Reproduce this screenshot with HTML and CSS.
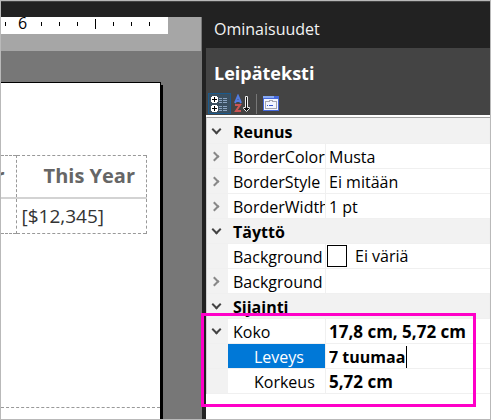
FILE: index.html
```
<!DOCTYPE html>
<html lang="fi">
<head>
<meta charset="utf-8">
<title>Ominaisuudet</title>
<link rel="stylesheet" href="styles.css">
</head>
<body>
<div class="window">
  <main class="designer">
    <div class="ruler-band">
      <svg class="ruler" width="167" height="17" viewBox="0 0 167 17" shape-rendering="crispEdges" aria-hidden="true">
        <path fill="#000" d="M4 5h1v4h-1zM40 5h1v4h-1zM58 5h1v4h-1zM76 5h1v4h-1zM94 2h1v10h-1zM112 5h1v4h-1zM130 5h1v4h-1zM148 5h1v4h-1z"/>
        <text class="ruler-number" x="17" y="12">6</text>
      </svg>
    </div>
    <div class="canvas">
      <div class="page">
        <table class="report">
          <tr><th class="previous">r</th><th>This Year</th></tr>
          <tr><td></td><td>[$12,345]</td></tr>
        </table>
        <div class="body-end"></div>
      </div>
    </div>
  </main>
  <aside class="panel">
    <h1 class="panel-title">Ominaisuudet</h1>
    <div class="object">
      <h2 class="object-name">Leipäteksti</h2>
      <div class="toolbar">
        <button class="tool active" aria-label="Luokiteltu">
          <svg width="21" height="19" viewBox="0 0 21 19" shape-rendering="crispEdges">
            <path fill="#fff" d="M3 2h5v1h1v5h-1v1h-5v-1h-1v-5h1zM3 11h5v1h1v5h-1v1h-5v-1h-1v-5h1z"/>
            <path fill="#000" d="M5 3h1v2h2v1h-2v2h-1v-2h-2v-1h2zM5 12h1v2h2v1h-2v2h-1v-2h-2v-1h2z"/>
            <path fill="#8ba3bf" d="M10 4h3v1h-3zM14 4h4v1h-4zM10 6h3v1h-3zM14 6h4v1h-4zM10 8h3v1h-3zM14 8h4v1h-4zM10 12h3v1h-3zM14 12h4v1h-4zM10 14h3v1h-3zM14 14h4v1h-4zM10 16h3v1h-3zM14 16h4v1h-4z"/>
          </svg>
        </button>
        <button class="tool" aria-label="Aakkosjärjestys">
          <svg width="21" height="19" viewBox="0 0 21 19">
            <path fill="none" stroke="#527be0" stroke-width="2" d="M3 9L6 2L9 9M4 7h4"/>
            <path fill="none" stroke="#ca5454" stroke-width="2" d="M3 11h5L4 17H9"/>
            <path fill="#111" stroke="#eee" stroke-width="1" d="M13.500 2.500h2v11h2v1l-3 3l-3-3v-1h2z"/>
          </svg>
        </button>
        <span class="separator"></span>
        <button class="tool" aria-label="Ominaisuussivut">
          <svg width="21" height="19" viewBox="0 0 21 19" shape-rendering="crispEdges">
            <path fill="#4669dc" d="M3 2h16v15h-16z"/>
            <path fill="#87a9f4" d="M3 2h11v2h-11z"/>
            <path fill="#f2f5ff" d="M4 5h14v11h-14z"/>
            <path fill="none" stroke="#a4a4b0" d="M5.500 7.500h4v-1h3v1h4v7h-11z"/>
            <path fill="#3657ce" d="M7 11h1v1h-1zM9 11h4v1h-4z"/>
          </svg>
        </button>
      </div>
    </div>
    <div class="properties">
      <div class="grid-area">
        <table class="grid">
          <colgroup><col class="gutter"><col class="names"><col></colgroup>
          <tbody>
            <tr class="category"><td><button class="expander open" aria-label="Reunus"></button></td><th colspan="2">Reunus</th></tr>
            <tr><td><button class="expander" aria-label="BorderColor"></button></td><th>BorderColor</th><td>Musta</td></tr>
            <tr><td><button class="expander" aria-label="BorderStyle"></button></td><th>BorderStyle</th><td>Ei mitään</td></tr>
            <tr><td><button class="expander" aria-label="BorderWidth"></button></td><th>BorderWidth</th><td>1 pt</td></tr>
          </tbody>
          <tbody>
            <tr class="category"><td><button class="expander open" aria-label="Täyttö"></button></td><th colspan="2">Täyttö</th></tr>
            <tr><td></td><th>Background</th><td class="color"><span class="color-value"><span class="swatch"></span>Ei väriä</span></td></tr>
            <tr><td><button class="expander" aria-label="Background"></button></td><th>Background</th><td></td></tr>
          </tbody>
          <tbody>
            <tr class="category"><td><button class="expander open" aria-label="Sijainti"></button></td><th colspan="2">Sijainti</th></tr>
            <tr class="changed"><td><button class="expander open" aria-label="Koko"></button></td><th>Koko</th><td>17,8 cm, 5,72 cm</td></tr>
            <tr class="changed child selected"><td></td><th><label for="width">Leveys</label></th><td><input class="editor" id="width" value="7 tuumaa"></td></tr>
            <tr class="changed child"><td></td><th>Korkeus</th><td>5,72 cm</td></tr>
          </tbody>
        </table>
        <div class="highlight"></div>
      </div>
    </div>
  </aside>
</div>
</body>
</html>
```
FILE: styles.css
```
* { box-sizing: border-box; }

body {
  margin: 0;
  font: 16px/24px "Open Sans", "Noto Sans", sans-serif;
  color: #000;
}

.window {
  display: grid;
  grid-template-columns: 201px 1fr;
  column-gap: 4px;
  min-height: 100vh;
  border: 1px solid #b9b9b9;
  background: #222;
  box-shadow: inset 0 1px #444;
  overflow: hidden;
}

.designer {
  display: flex;
  flex-direction: column;
  padding-top: 16px;
}

.ruler-band {
  height: 34px;
  background: #a6a6a6;
  border-right: 1px solid #777;
}

.ruler {
  display: block;
  background: #fff;
}

.ruler-number {
  font: 16px "Open Sans", sans-serif;
}

.canvas {
  flex: 1;
  display: flex;
  padding: 31px 39px 0 0;
  background: #777;
}

.page {
  flex: 1;
  margin-right: 2px;
  padding-top: 72px;
  background: #fff;
  border-top: 1px solid #000;
  border-right: 1px solid #000;
  box-shadow: 2px 3px #000;
}

.report {
  width: 146px;
  height: 79px;
  table-layout: fixed;
  border-collapse: collapse;
  border-top: 1px dashed #999;
  border-bottom: 1px dashed #999;
  color: #333;
  font-size: 19px;
}

.report th,
.report td {
  padding: 0 5px;
  border-right: 1px dashed #999;
  text-align: left;
}

.report th {
  height: 42px;
  padding-right: 11px;
  border-bottom: 2px solid #d3d3d3;
  color: #666;
  font-size: 20px;
  text-align: right;
}

.report .previous {
  width: 15px;
  padding: 0 11px 0 0;
  direction: rtl;
  text-align: right;
}

.body-end {
  margin-top: 173px;
  border-top: 1px dashed #999;
}

.panel {
  display: flex;
  flex-direction: column;
  min-width: 0;
  padding-top: 1px;
}

.panel-title {
  margin: 0;
  padding: 15px 8px 7px;
  color: #f2f2f2;
  font-size: 16px;
  font-weight: 400;
}

.object {
  height: 67px;
  background: #444;
}

.object-name {
  margin: 0;
  padding: 13px 8px 8px;
  color: #fff;
  font-size: 18px;
  font-weight: 700;
}

.toolbar {
  display: flex;
  padding-left: 2px;
}

.tool {
  display: flex;
  width: 23px;
  height: 21px;
  padding: 0;
  border: 1px solid transparent;
  background: none;
}

.tool.active {
  border-color: #1b5a8c;
  background: #3a4f60;
}

.separator {
  width: 1px;
  margin: 1px 2px 0;
  background: #777;
}

.properties {
  flex: 1;
  padding-top: 2px;
  background: #fff;
}

.grid-area {
  position: relative;
  padding-top: 1px;
  border-top: 1px solid #a0a0a0;
  border-left: 1px solid #d0d0d0;
  background: #f2f2f2;
}

.grid {
  width: 100%;
  table-layout: fixed;
  border-collapse: separate;
  border-spacing: 0;
}

.gutter { width: 21px; }
.names { width: 98px; }

.grid td,
.grid th {
  height: 25px;
  padding: 2px 1px 0 5px;
  border-bottom: 1px solid #f0f0f0;
  background: #fff;
  font-weight: 400;
  line-height: 22px;
  text-align: left;
  white-space: nowrap;
  overflow: hidden;
}

.grid th {
  border-right: 1px solid #f0f0f0;
  text-overflow: clip;
}

.grid td:last-child { padding-left: 3px; }

.grid td:first-child,
.grid .category th {
  background: #f2f2f2;
}

.grid td:first-child { padding: 0; }
.grid .category th { font-weight: 700; }
.grid .child th { padding-left: 26px; }

.grid .changed td {
  font-size: 17px;
  font-weight: 700;
}

.grid .selected th {
  background: #0078d7;
  color: #fff;
}

.grid .color:last-child {
  padding-top: 1px;
  padding-left: 1px;
}

.color-value {
  display: flex;
  gap: 8px;
  line-height: 23px;
}

.swatch {
  width: 20px;
  height: 22px;
  border: 1px solid #000;
}

.editor {
  display: block;
  width: 78px;
  height: 22px;
  padding: 0;
  border: 0;
  border-right: 1px solid #000;
  background: none;
  color: #000;
  font: inherit;
  font-size: 16px;
  outline: 0;
}

.expander {
  display: block;
  width: 7px;
  height: 7px;
  margin-left: 4px;
  padding: 0;
  border: solid #888;
  border-width: 2px 2px 0 0;
  background: none;
  transform: rotate(45deg);
}

.expander.open {
  margin: -4px 0 0 6px;
  border-color: #444;
  transform: rotate(135deg);
}

.highlight {
  position: absolute;
  top: 195px;
  right: 14px;
  bottom: -13px;
  left: -6px;
  border: 3px solid #ff00c8;
  pointer-events: none;
}
```
